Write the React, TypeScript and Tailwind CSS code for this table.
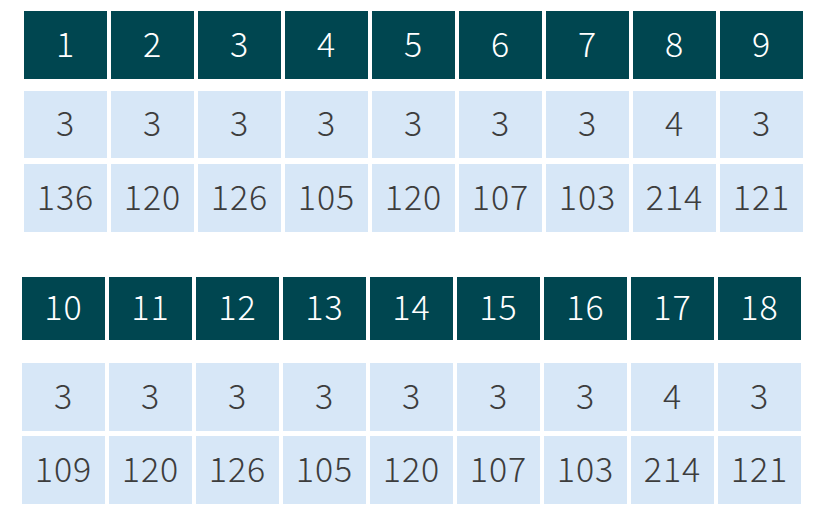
const top = {
  head: ["1", "2", "3", "4", "5", "6", "7", "8", "9"],
  par: ["3", "3", "3", "3", "3", "3", "3", "4", "3"],
  yards: ["136", "120", "126", "105", "120", "107", "103", "214", "121"],
};

const bottom = {
  head: ["10", "11", "12", "13", "14", "15", "16", "17", "18"],
  par: ["3", "3", "3", "3", "3", "3", "3", "4", "3"],
  yards: ["109", "120", "126", "105", "120", "107", "103", "214", "121"],
};

const font = { fontFamily: '"Noto Sans CJK JP", "Noto Sans", sans-serif' };

function Row({ cells, dark, h }: { cells: string[]; dark?: boolean; h: string }) {
  return (
    <div className="flex gap-1">
      {cells.map((c, i) => (
        <div
          key={i}
          className={`w-[83px] ${h} pb-[6px] flex items-center justify-center text-[34px] font-light tracking-[1px] ${
            dark ? "bg-[#004650] text-white" : "bg-[#d7e7f7] text-[#3d3d3d]"
          }`}
        >
          {c}
        </div>
      ))}
    </div>
  );
}

export default function App() {
  return (
    <div className="w-[827px] h-[514px] bg-white relative" style={font}>
      <div className="pt-[11px] pl-[24px] flex flex-col">
        <Row cells={top.head} dark h="h-[68px]" />
        <div className="mt-[12px]">
          <Row cells={top.par} h="h-[67px]" />
        </div>
        <div className="mt-[6px]">
          <Row cells={top.yards} h="h-[68px]" />
        </div>
      </div>
      <div className="pt-[45px] pl-[22px] flex flex-col">
        <Row cells={bottom.head} dark h="h-[63px]" />
        <div className="mt-[23px]">
          <Row cells={bottom.par} h="h-[68px]" />
        </div>
        <div className="mt-[5px]">
          <Row cells={bottom.yards} h="h-[68px]" />
        </div>
      </div>
    </div>
  );
}
